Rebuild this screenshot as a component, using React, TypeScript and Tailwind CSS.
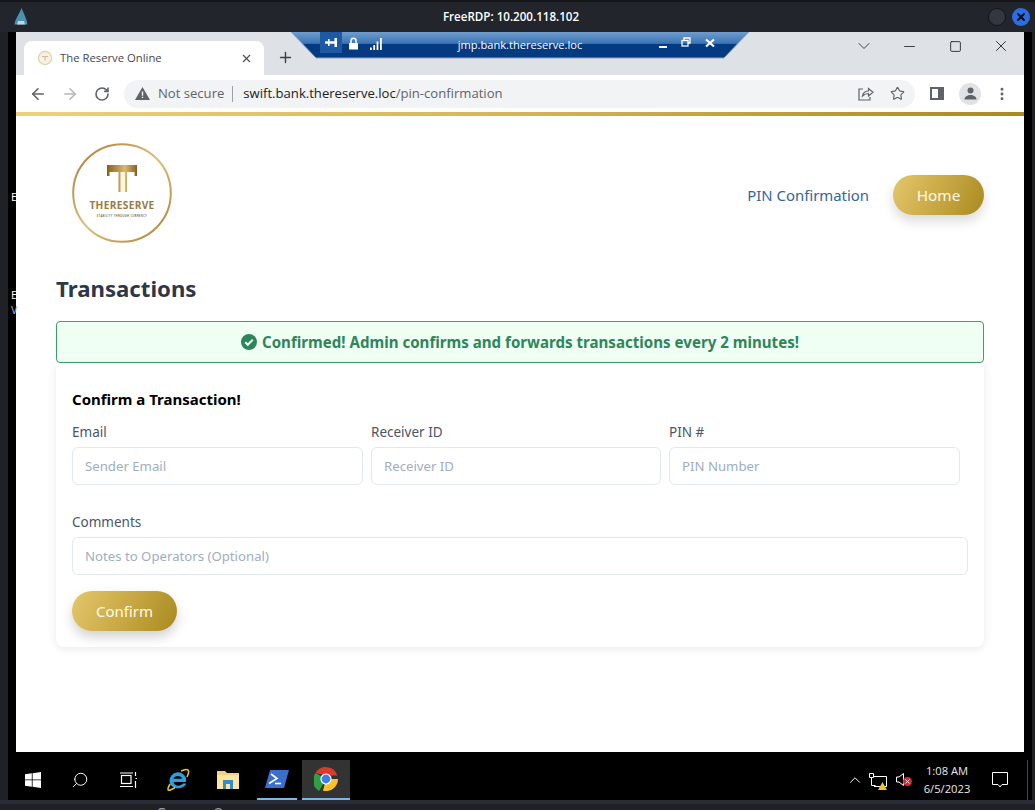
import React from 'react';
import { ArrowLeft, ArrowRight, RotateCw, Plus, X, ChevronDown, Minus, Square, Star, MoreVertical, Search, ChevronUp } from 'lucide-react';

const gold = 'bg-[linear-gradient(115deg,#e3c76b_0%,#c9a945_50%,#a98a1f_100%)]';

const Field = ({ label, placeholder, className }: { label: string; placeholder: string; className: string }) => (
  <div className={className}>
    <label className="block text-[13.500px] leading-[21px] text-[#4a5568] mb-[4px]">{label}</label>
    <input
      placeholder={placeholder}
      className="block w-full h-[38px] px-[12px] text-[13.200px] bg-white border border-[#e2e8f0] rounded-[6px] placeholder:text-[#a0aec0] outline-none"
    />
  </div>
);

const Logo = () => (
  <svg width="100" height="100" viewBox="0 0 100 100">
    <defs>
      <linearGradient id="ring" x1="0" y1="0" x2="1" y2="1">
        <stop offset="0" stopColor="#a9752d" />
        <stop offset="0.5" stopColor="#dcc07c" />
        <stop offset="1" stopColor="#a97f2e" />
      </linearGradient>
      <linearGradient id="tee" x1="0" y1="0" x2="1" y2="0">
        <stop offset="0" stopColor="#8a5f1d" />
        <stop offset="0.6" stopColor="#d9b96e" />
        <stop offset="1" stopColor="#8a5f1d" />
      </linearGradient>
    </defs>
    <circle cx="50" cy="50" r="48.800" fill="none" stroke="url(#ring)" strokeWidth="2" />
    <path d="M35 22H65V33H62.500V29H55V49H46.500V29H37.500V33H35Z" fill="url(#tee)" />
    <rect x="48.500" y="29" width="4.500" height="20" fill="#fdf6df" />
    <text x="50" y="65.500" textAnchor="middle" fontFamily="Open Sans" fontWeight="700" fontSize="10.200" letterSpacing="0.300" fill="#9a7a45">THERESERVE</text>
    <text x="50" y="73.500" textAnchor="middle" fontFamily="Open Sans" fontWeight="600" fontSize="2.700" letterSpacing="0.350" fill="#5f5240">STABILITY THROUGH CURRENCY</text>
  </svg>
);

const Favicon = () => (
  <svg width="16" height="16" viewBox="0 0 16 16">
    <circle cx="8" cy="8" r="6.600" fill="#f6f1e2" stroke="#ddd0aa" strokeWidth="1.200" />
    <path d="M5 6.500h6M8 6.500v4" stroke="#cdbd92" strokeWidth="1" />
  </svg>
);

const ConnectionBar = () => (
  <div className="absolute left-[291px] top-[32px] w-[458px] h-[27px] z-10">
    <svg width="458" height="27" viewBox="0 0 458 27" className="absolute inset-0">
      <defs>
        <linearGradient id="bar" x1="0" y1="0" x2="0" y2="1">
          <stop offset="0" stopColor="#6f9ccd" />
          <stop offset="0.44" stopColor="#3b74b4" />
          <stop offset="0.46" stopColor="#043a82" />
          <stop offset="1" stopColor="#053a80" />
        </linearGradient>
      </defs>
      <polygon points="0,0 458,0 433,26 25,26" fill="url(#bar)" />
      <polyline points="0,0 25,26 433,26 458,0" fill="none" stroke="#8fa6c4" strokeWidth="1" />
    </svg>
    <div className="absolute left-[29px] top-0 w-[22px] h-[21px] bg-[#1d5aa3] flex items-center justify-center">
      <svg width="12" height="9" viewBox="0 0 12 9" fill="#fff">
        <path d="M0 3.200h9.500V0H12v9H9.500V5.800H0z" />
        <path d="M3 1h1.600v7H3z" />
      </svg>
    </div>
    <div className="absolute left-[57px] top-[5px] flex items-center gap-[11px]">
      <svg width="11" height="13" viewBox="0 0 11 13" fill="#fff">
        <path d="M1 6h9v6.500H1z" />
        <path d="M3 6V3.800a2.500 2.500 0 0 1 5 0V6" fill="none" stroke="#fff" strokeWidth="1.500" />
      </svg>
      <svg width="12" height="12" viewBox="0 0 12 12" fill="#fff">
        <path d="M0 9.500h1.800V12H0zM3.300 7h1.800v5H3.300zM6.600 3.500h1.800V12H6.600zM10 0h1.800v12H10z" />
      </svg>
    </div>
    <div className="absolute left-0 right-0 top-[5px] text-center text-[11.100px] leading-[16px] text-white font-['Open_Sans',sans-serif]">jmp.bank.thereserve.loc</div>
    <div className="absolute left-[368px] top-[5px] flex items-start gap-[14px] text-white">
      <div className="w-[8px] h-[2px] bg-white mt-[9px]" />
      <svg width="10" height="11" viewBox="0 0 10 11" fill="none" stroke="#fff" strokeWidth="1.300">
        <path d="M3 3V1h6v5H7" />
        <rect x="1" y="3.500" width="6" height="5.500" />
      </svg>
      <svg width="10" height="10" viewBox="0 0 10 10" stroke="#fff" strokeWidth="2.200" className="mt-[1px]">
        <path d="M1 1.500l8 7M9 1.500l-8 7" />
      </svg>
    </div>
  </div>
);

const TitleBar = () => (
  <div className="h-[32px] flex items-center relative bg-[#22252c] border-t-[2px] border-[#14161a] shrink-0">
    <svg width="14" height="18" viewBox="0 0 14 18" className="ml-[14px]">
      <path d="M7.500 0C9 4 13 11 13.500 16.500H.5C1 11 5 7 7.500 0z" fill="#4b93ad" />
      <path d="M4 13h6l1 3.500H3z" fill="#bcd9e2" />
    </svg>
    <div className="absolute left-0 w-[1022px] text-center text-[11.600px] font-semibold text-white font-['Open_Sans',sans-serif]">FreeRDP: 10.200.118.102</div>
    <div className="ml-auto mr-[5px] flex items-center gap-[6px]">
      <div className="w-[18px] h-[18px] rounded-full bg-[#33373f] border border-[#14161a]" />
      <div className="w-[18px] h-[18px] rounded-full bg-[#2a6fe0] flex items-center justify-center">
        <X size={12} strokeWidth={4} color="#0b1020" />
      </div>
    </div>
  </div>
);

const TabStrip = () => (
  <div className="h-[43px] bg-[#dee1e6] flex items-end pl-[8px] relative shrink-0">
    <div className="w-[240px] h-[34px] bg-white rounded-t-[8px] flex items-center pl-[13px] pr-[11px]">
      <Favicon />
      <span className="ml-[7px] text-[11.300px] text-[#45494e] font-['Open_Sans',sans-serif]">The Reserve Online</span>
      <X size={13} strokeWidth={2} color="#4a4d51" className="ml-auto" />
    </div>
    <Plus size={17} strokeWidth={2} color="#3c4043" className="ml-[13px] mb-[9px]" />
    <div className="ml-auto h-full flex items-start text-[#222]">
      <ChevronDown size={20} strokeWidth={1} className="mt-[4px] mr-[27px]" />
      <Minus size={17} strokeWidth={1.200} className="mt-[6px] mr-[31px]" />
      <Square size={13} strokeWidth={1.600} className="mt-[8px] mr-[30px]" />
      <X size={18} strokeWidth={1.200} className="mt-[5px] mr-[14px]" />
    </div>
  </div>
);

const Toolbar = () => (
  <div className="h-[37px] bg-white flex items-center pl-[13px] pr-[14px] shrink-0">
    <ArrowLeft size={18} strokeWidth={2.200} color="#5f6368" />
    <ArrowRight size={18} strokeWidth={2.200} color="#b4b7bb" className="ml-[14px]" />
    <RotateCw size={16} strokeWidth={2.400} color="#5f6368" className="ml-[15px]" />
    <div className="ml-[14px] w-[792px] h-[28px] rounded-full bg-[#f1f3f4] flex items-center pl-[11px] pr-[10px] font-['Open_Sans',sans-serif] text-[13.100px]">
      <svg width="15" height="13" viewBox="0 0 15 13">
        <path d="M7.500 0L15 13H0z" fill="#5f6368" />
        <path d="M6.800 4.500h1.400v4.300H6.800zM6.800 9.700h1.400v1.400H6.800z" fill="#f1f3f4" />
      </svg>
      <span className="ml-[8px] text-[#5f6368]">Not secure</span>
      <span className="ml-[8px] w-px h-[16px] bg-[#9aa0a6]" />
      <span className="ml-[10px] text-[#202124]">swift.bank.thereserve.loc<span className="text-[#5f6368]">/pin-confirmation</span></span>
      <svg width="16" height="15" viewBox="0 0 16 15" fill="none" stroke="#5f6368" strokeWidth="1.200" className="ml-auto mr-[16px]">
        <path d="M5 3H1v11h11v-3" />
        <path d="M4.500 10c.5-3 3-5 6-5V2.500l4.500 3.700-4.500 3.700V7.500c-2.500 0-4.500 1-6 2.500z" />
      </svg>
      <Star size={15} strokeWidth={1.800} color="#5f6368" />
    </div>
    <div className="ml-[15px] w-[14px] h-[13px] border-[2px] border-[#5f6368] border-r-[6px]" />
    <div className="ml-[15px] w-[22px] h-[22px] rounded-full bg-[#e0e2e6] flex items-center justify-center">
      <svg width="13" height="13" viewBox="0 0 13 13" fill="#5f6368">
        <circle cx="6.500" cy="3.500" r="3" />
        <path d="M.5 12.500c0-3 3-4.500 6-4.500s6 1.500 6 4.500z" />
      </svg>
    </div>
    <MoreVertical size={16} strokeWidth={2.400} color="#5f6368" className="ml-[13px]" />
  </div>
);

const Page = () => (
  <div className="flex-1 bg-white px-[40px] font-['Noto_Sans',sans-serif]">
    <div className="flex items-center pl-[16px] pt-[27px]">
      <Logo />
      <nav className="ml-auto mt-[4px] flex items-center">
        <a className="text-[14.900px] text-[#35669b]">PIN Confirmation</a>
        <a className={`ml-[24px] w-[91px] h-[40px] rounded-full ${gold} text-[#fffbe8] text-[15.300px] flex items-center justify-center shadow-[0_6px_12px_rgba(0,0,0,0.15)]`}>Home</a>
      </nav>
    </div>
    <h1 className="mt-[28px] text-[22.200px] leading-[36px] font-bold text-[#2d3748]">Transactions</h1>
    <div className="mt-[14px] h-[42px] rounded-[4px] border border-[#38a169] bg-[#f0fff4] flex items-center justify-center gap-[5px] text-[15.100px] font-bold text-[#2f855a]">
      <svg width="16" height="16" viewBox="0 0 16 16">
        <circle cx="8" cy="8" r="8" fill="#2f855a" />
        <path d="M4.300 8.300l2.500 2.500 4.900-5" fill="none" stroke="#f0fff4" strokeWidth="2" />
      </svg>
      <span>Confirmed! Admin confirms and forwards transactions every 2 minutes!</span>
    </div>
    <div className="rounded-b-[8px] bg-white shadow-[0_2px_8px_rgba(0,0,0,0.09)] px-[16px] pt-[24px] pb-[16px] h-[284px]">
      <h2 className="text-[15px] leading-[24px] font-bold text-black">Confirm a Transaction!</h2>
      <div className="mt-[11px] flex gap-[8px]">
        <Field label="Email" placeholder="Sender Email" className="w-[291px]" />
        <Field label="Receiver ID" placeholder="Receiver ID" className="w-[290px]" />
        <Field label="PIN #" placeholder="PIN Number" className="w-[291px]" />
      </div>
      <Field label="Comments" placeholder="Notes to Operators (Optional)" className="mt-[27px]" />
      <button className={`mt-[16px] w-[105px] h-[40px] rounded-full ${gold} text-[#fffbe8] text-[15px] shadow-[0_6px_12px_rgba(0,0,0,0.18)]`}>Confirm</button>
    </div>
  </div>
);

const Taskbar = () => (
  <div className="h-[48px] pt-[8px] bg-black flex items-stretch text-white shrink-0">
    <div className="w-[48px] pl-[1px] flex items-center justify-center">
      <svg width="16" height="16" viewBox="0 0 16 16" fill="#fff">
        <path d="M0 2.300L6.800 1.300V7.500H0zM7.600 1.200L16 0V7.500H7.600zM0 8.300H6.800V14.700L0 13.700zM7.600 8.300H16V16L7.600 14.800z" />
      </svg>
    </div>
    <div className="w-[48px] flex items-center justify-center">
      <Search size={18} strokeWidth={1.300} className="-scale-x-100" />
    </div>
    <div className="w-[48px] flex items-center justify-center">
      <svg width="17" height="16" viewBox="0 0 17 16" fill="none" stroke="#fff" strokeWidth="1.200">
        <rect x="1.500" y="3.500" width="9.500" height="8" />
        <path d="M0 1h13M0 14.500h13M15.500 0v4M15.500 6.500h1.500M15.500 9v7" />
      </svg>
    </div>
    <div className="w-[52px] flex items-center justify-center">
      <svg width="24" height="24" viewBox="0 0 24 24">
        <path d="M3.500 13a8.500 8.500 0 0 1 16.500-3v4H7.500c.5 4 6.500 5 9.500 1.500h3.500c-3 7-16.500 6.500-17-2.500z" fill="#2f9fdd" fillRule="evenodd" />
        <path d="M7.500 10.700c.5-3.500 8-3.500 8.500 0z" fill="#000" />
        <path d="M4 16c-4 7-2 8 5 3.500M15 3c6-3 10-2 6 6" fill="none" stroke="#efc130" strokeWidth="1.600" />
      </svg>
    </div>
    <div className="w-[48px] flex items-center justify-center">
      <svg width="22" height="20" viewBox="0 0 22 20">
        <path d="M0 1h8l2 2h12v16H0z" fill="#f3d27a" />
        <path d="M0 5h22v14H0z" fill="#fbe5a0" />
        <path d="M6 10h10v9h-3v-5H9v5H6z" fill="#2f8fce" />
      </svg>
    </div>
    <div className="w-[40px] ml-[5px] flex items-center justify-center border-b-[2px] border-[#76b9ed]">
      <svg width="24" height="20" viewBox="0 0 24 20">
        <path d="M5 1h19l-5 18H0z" fill="#3a6fcb" />
        <path d="M6 5l6 4.500-8 5" fill="none" stroke="#fff" strokeWidth="1.600" />
        <path d="M10 14.500h6" stroke="#fff" strokeWidth="1.600" />
      </svg>
    </div>
    <div className="w-[48px] ml-[5px] bg-[#333] flex items-center justify-center border-b-[2px] border-[#76b9ed]">
      <svg width="24" height="24" viewBox="0 0 24 24">
        <path d="M12 12L5.100 24A12 12 0 0 1 1.600 6z" fill="#2f9e44" />
        <path d="M12 12h12A12 12 0 0 1 9 23.700z" fill="#fbc02d" />
        <path d="M1.600 6A12 12 0 0 1 23.400 8.500H12z" fill="#db3a2f" />
        <circle cx="12" cy="12" r="5.600" fill="#fff" />
        <circle cx="12" cy="12" r="4.400" fill="#3d7fe6" />
      </svg>
    </div>
    <div className="ml-auto flex items-center border-r border-[#444] mr-[4px]">
      <ChevronUp size={18} strokeWidth={1.300} />
      <div className="relative ml-[5px] w-[18px] h-[15px]">
        <svg width="18" height="15" viewBox="0 0 18 15" fill="none" stroke="#fff" strokeWidth="1">
          <path d="M4 3.500h13.500v10H5M.5.500h4v4h-4zM2.500 4.500v8h4" />
        </svg>
        <svg width="9" height="8" viewBox="0 0 9 8" className="absolute right-0 bottom-[-2px]">
          <path d="M4.500 0L9 8H0z" fill="#f1c232" />
        </svg>
      </div>
      <div className="relative ml-[9px] w-[16px] h-[15px]">
        <svg width="8" height="13" viewBox="0 0 8 13" fill="none" stroke="#fff" strokeWidth="1">
          <path d="M.5 4h2.500l4.500-3.500v12L3 9H.5z" />
        </svg>
        <div className="absolute left-[7px] top-[4px] w-[9px] h-[9px] rounded-full bg-[#d9262f] flex items-center justify-center">
          <X size={7} strokeWidth={3} />
        </div>
      </div>
      <div className="ml-[9px] w-[52px] text-center text-[11.200px] leading-[18px] text-[#e8e8e8] font-['Open_Sans',sans-serif]">
        <div>1:08 AM</div>
        <div>6/5/2023</div>
      </div>
      <div className="ml-[19px] mr-[19px]">
        <svg width="16" height="16" viewBox="0 0 16 16" fill="none" stroke="#fff" strokeWidth="1">
          <path d="M.5.500h15v12H10l-2 2.500-2-2.500H.5z" />
        </svg>
      </div>
    </div>
  </div>
);

// scraps of the desktop behind the RDP window
const DesktopScraps = () => (
  <>
    <span className="absolute left-[11px] top-[190px] text-[11px] leading-[14px] text-white font-['Open_Sans',sans-serif] z-10">E</span>
    <span className="absolute left-[11px] top-[288px] text-[11px] leading-[14px] text-white font-['Open_Sans',sans-serif] z-10">E</span>
    <span className="absolute left-[11px] top-[303px] text-[11px] leading-[14px] text-[#9db8d8] font-['Open_Sans',sans-serif] z-10">V</span>
    <span className="absolute left-[157px] top-[804px] text-[17px] leading-[20px] tracking-[1px] text-[#9a9ca3] font-['Open_Sans',sans-serif] z-10">Server2</span>
  </>
);

export default function App() {
  return (
    <div className="w-[1035px] h-[810px] overflow-hidden bg-[#1f2126] relative flex flex-col">
      <TitleBar />
      <ConnectionBar />
      <DesktopScraps />
      <div className="ml-[8px] mr-[3px] bg-black px-[8px] h-[768px] flex flex-col shrink-0">
        <div className="h-[720px] flex flex-col shrink-0">
          <TabStrip />
          <Toolbar />
          <div className="h-[4px] bg-[linear-gradient(90deg,#ecd27f_0%,#d4b455_50%,#a98a1f_100%)] shrink-0" />
          <Page />
        </div>
        <div className="-mx-[8px]">
          <Taskbar />
        </div>
      </div>
      <div className="h-[4px] bg-[#2a2d35] shrink-0" />
    </div>
  );
}
